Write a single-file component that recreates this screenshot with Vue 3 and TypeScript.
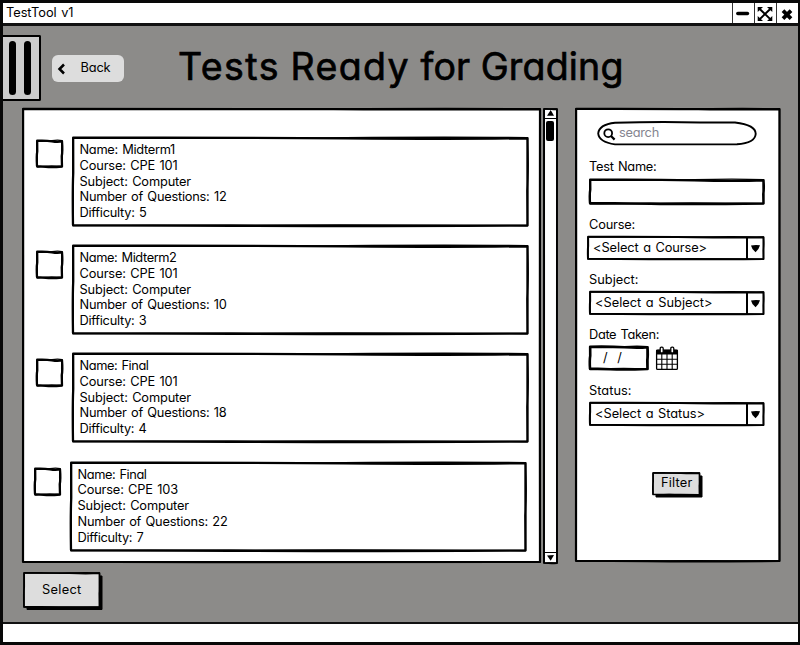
<script setup lang="ts">
import { defineComponent, h } from 'vue'
import type { Directive } from 'vue'

interface Line { text: string; width: number }
interface TestItem { id: number; shifted: boolean; lines: Line[] }

/** Box with a slightly uneven, hand-drawn outline; the content sits over it. */
const SketchBox = defineComponent({
  props: {
    w: { type: Number, required: true },
    h: { type: Number, required: true },
    stroke: { type: Number, default: 2.4 },
    fill: { type: String, default: '#fff' },
    wobble: { type: Number, default: 0.5 },
    shadow: { type: Boolean, default: false },
  },
  setup(props, { slots }) {
    const outline = (k: number): string => {
      const { w, h: ht } = props
      return `M${0.2 * k} ${-0.3 * k} Q${w * 0.35} ${-0.8 * k} ${w * 0.6} ${0.4 * k} T${w} ${0.3 * k} ` +
        `Q${w + 0.9 * k} ${ht * 0.4} ${w - 0.3 * k} ${ht * 0.6} L${w} ${ht} ` +
        `Q${w * 0.6} ${ht + 1.1 * k} ${w * 0.35} ${ht + 0.3 * k} T0 ${ht - 0.5 * k} ` +
        `Q${-0.7 * k} ${ht * 0.6} ${0.3 * k} ${ht * 0.4} Z`
    }
    return () =>
      h('div', { class: 'sketch', style: { width: `${props.w}px`, height: `${props.h}px` } }, [
        h('svg', { class: 'sketch-line', width: props.w, height: props.h }, [
          props.shadow
            ? h('path', { d: `M3 3H${props.w + 2.5}V${props.h + 2.5}H3Z`, fill: '#000', stroke: '#000', 'stroke-width': 1 })
            : null,
          h('path', { d: outline(props.wobble), fill: props.fill, stroke: '#000', 'stroke-width': props.stroke, 'stroke-linejoin': 'round' }),
          h('path', { d: outline(-props.wobble), fill: 'none', stroke: '#000', 'stroke-width': props.stroke * 0.6, 'stroke-linejoin': 'round' }),
        ]),
        h('div', { class: 'sketch-body' }, slots.default?.()),
      ])
  },
})

/** Spreads the letters of a label so that it takes up the given width. */
const vFit: Directive<HTMLElement, number> = {
  mounted(el, { value }) {
    const count = (el.textContent ?? '').length
    const natural = el.getBoundingClientRect().width
    el.style.letterSpacing = `${(value - natural) / count}px`
  },
}

const describe = (id: number, shifted: boolean, name: string, course: string, questions: string, level: string, widths: number[]): TestItem => ({
  id,
  shifted,
  lines: [`Name: ${name}`, `Course: ${course}`, 'Subject: Computer', `Number of Questions: ${questions}`, `Difficulty: ${level}`]
    .map((text, i) => ({ text, width: widths[i] })),
})

const tests: TestItem[] = [
  describe(1, false, 'Midterm1', 'CPE 101', '12', '5', [95.5, 98, 111.5, 147, 67]),
  describe(2, false, 'Midterm2', 'CPE 101', '10', '3', [97, 98, 111.5, 147, 67]),
  describe(3, false, 'Final', 'CPE 101', '18', '4', [69, 98, 111.5, 147, 67]),
  describe(4, true, 'Final', 'CPE 103', '22', '7', [69, 100.5, 111.5, 150, 66]),
]
</script>

<template>
  <div class="window">
    <header class="titlebar">
      <span v-fit="67.5" class="app-name">TestTool v1</span>
      <div class="controls">
        <span class="control">
          <svg width="22" height="19"><path d="M4.8 10.5H14.5" stroke="#000" stroke-width="3.4" stroke-linecap="round" /></svg>
        </span>
        <span class="control">
          <svg width="22" height="19">
            <path d="M5 6.3L15 15.9M15 6.3L5 15.9" stroke="#000" stroke-width="2" />
            <path d="M2.7 4.1H8L2.7 9.1ZM17.3 4.1H12L17.3 9.1ZM2.7 17.9H8L2.7 12.9ZM17.3 17.9H12L17.3 12.9Z" />
          </svg>
        </span>
        <span class="control">
          <svg width="22" height="19"><path d="M6 7.7L14 15.7M14 7.7L6 15.7" stroke="#000" stroke-width="3.8" /></svg>
        </span>
      </div>
    </header>

    <div class="heading">
      <div class="menu"><i></i><i></i></div>
      <button class="back">
        <svg width="9" height="12"><path d="M7 1.5L2.5 6L7 10.5" fill="none" stroke="#000" stroke-width="2.5" /></svg>
        <span v-fit="30">Back</span>
      </button>
      <h1>
        <span v-fit="102">Tests</span>{{ ' ' }}<span v-fit="119.5">Ready</span>{{ ' ' }}<span v-fit="49.5">for</span>{{ ' ' }}<span v-fit="143">Grading</span>
      </h1>
    </div>

    <main>
      <SketchBox :w="517" :h="453" :stroke="2.2" class="panel">
        <div class="list">
          <div v-for="test in tests" :key="test.id" class="row" :class="{ shifted: test.shifted }">
            <SketchBox :w="25" :h="25.5" :wobble="0.9" :stroke="2.3" class="check" />
            <SketchBox :w="454.5" :h="87.5" :stroke="2.3" :wobble="0.8">
              <div class="details">
                <div v-for="line in test.lines" :key="line.text"><span v-fit="line.width">{{ line.text }}</span></div>
              </div>
            </SketchBox>
          </div>
        </div>
      </SketchBox>

      <SketchBox :w="13" :h="454" :stroke="1.9" :wobble="0.3" class="scroll">
        <div class="scrollbar">
          <div class="arrow up"><svg width="9" height="8"><path d="M1 6.7L4.7 1L8 6.7Z" /></svg></div>
          <div class="thumb"></div>
          <div class="arrow down"><svg width="9" height="8"><path d="M1 1.4L8 1L4.7 6.8Z" /></svg></div>
        </div>
      </SketchBox>

      <SketchBox :w="203.5" :h="452" :stroke="2.2" class="filters">
        <form class="form" @submit.prevent>
          <div class="search">
            <svg class="pill" width="160" height="25"><path d="M18 1.8Q62 .5 103 1.5L138 1.5Q159 4 158.7 13Q158 22 140 23.3Q90 23.6 18 23.4Q2 21 1.2 12.5Q2 3.6 18 1.8Z" fill="#fff" stroke="#000" stroke-width="1.9" /></svg>
            <div class="search-body">
              <svg width="13" height="13"><circle cx="5.2" cy="5.2" r="3.9" fill="none" stroke="#000" stroke-width="1.8" /><path d="M8 8L11.6 11.6" stroke="#000" stroke-width="2.2" /></svg>
              <span v-fit="40">search</span>
            </div>
          </div>

          <label class="label name"><span v-fit="67.5">Test Name:</span></label>
          <SketchBox :w="173.5" :h="23.5" :wobble="0.9" />

          <label class="label course"><span v-fit="46">Course:</span></label>
          <SketchBox :w="175.5" :h="22" :stroke="2" class="wide">
            <div class="select"><span v-fit="114">&lt;Select a Course&gt;</span><i><svg width="11" height="9"><path d="M1 1.5Q5 .5 10 1.2Q9 5 5.6 8.3Q2 6 1 1.5Z" /></svg></i></div>
          </SketchBox>

          <label class="label subject"><span v-fit="49.5">Subject:</span></label>
          <SketchBox :w="173.5" :h="22" :stroke="2">
            <div class="select"><span v-fit="117.5">&lt;Select a Subject&gt;</span><i><svg width="11" height="9"><path d="M1 1.5Q5 .5 10 1.2Q9 5 5.6 8.3Q2 6 1 1.5Z" /></svg></i></div>
          </SketchBox>

          <label class="label date"><span v-fit="70">Date Taken:</span></label>
          <div class="date-row">
            <SketchBox :w="57.5" :h="22" :stroke="2.6" :wobble="0.8"><div class="date-text">/&nbsp; /</div></SketchBox>
            <svg width="24" height="25" viewBox="0 0 24 25">
              <rect x="1.6" y="4.2" width="20.8" height="19.2" rx="1" fill="#fff" stroke="#000" stroke-width="1.3" />
              <path d="M1 3.8H23V8.5H1Z" />
              <path d="M6.8 8V23M12 8V23M17.2 8V23M2 13.2H22M2 18.2H22" stroke="#000" stroke-width="1.1" />
              <rect x="5.2" y="1.2" width="3" height="5.8" rx="1.2" fill="#fff" stroke="#000" stroke-width="1.3" />
              <rect x="15.8" y="1.2" width="3" height="5.8" rx="1.2" fill="#fff" stroke="#000" stroke-width="1.3" />
            </svg>
          </div>

          <label class="label status"><span v-fit="42.5">Status:</span></label>
          <SketchBox :w="173.5" :h="22" :stroke="2">
            <div class="select"><span v-fit="110">&lt;Select a Status&gt;</span><i><svg width="11" height="9"><path d="M1 1.5Q5 .5 10 1.2Q9 5 5.6 8.3Q2 6 1 1.5Z" /></svg></i></div>
          </SketchBox>

          <SketchBox :w="46.5" :h="21.5" :stroke="1.7" fill="#ddd" shadow class="filter">
            <div class="button"><span v-fit="31.5">Filter</span></div>
          </SketchBox>
        </form>
      </SketchBox>
    </main>

    <div class="actions">
      <SketchBox :w="75.5" :h="34" :stroke="1.8" fill="#ddd" shadow>
        <div class="button"><span v-fit="39.5">Select</span></div>
      </SketchBox>
    </div>
    <footer></footer>
  </div>
</template>

<style>
body { background: #8c8b89; }
.sketch { display: grid; flex: none; }
.sketch-line { grid-area: 1 / 1; overflow: visible; display: block; }
.sketch-body { grid-area: 1 / 1; z-index: 1; min-width: 0; min-height: 0; }
</style>

<style scoped>
* { box-sizing: border-box; }
.window {
  width: 800px; height: 645px; display: flex; flex-direction: column; overflow: hidden;
  background: #8c8b89; color: #000; border: solid #080808; border-width: 3px 2px 3px 3px;
  font: 400 12.8px/16px Inter, "Liberation Sans", sans-serif; font-feature-settings: "cv11", "calt" 0;
  white-space: nowrap; word-spacing: 1px;
}
svg { display: block; flex: none; }
.titlebar { flex: none; height: 23px; display: flex; justify-content: space-between; background: #fff; border-bottom: 3px solid #111; }
.app-name { align-self: flex-start; margin: 2px 0 0 3px; }
.controls { display: flex; }
.control { width: 22px; border-left: 1.5px solid #333; overflow: hidden; }
.heading { flex: none; height: 82px; display: flex; align-items: flex-start; }
.menu { width: 38px; height: 66px; margin-top: 9px; background: #ccc; border: 2px solid #000; border-left: 0; border-radius: 0 2px 2px 0; display: flex; gap: 7.5px; padding: 4px 0 0 5.5px; }
.menu i { width: 7.5px; height: 54px; border-radius: 4px; background: #000; }
.back { margin: 29px 0 0 11px; width: 72px; height: 27px; border: 0; border-radius: 6px; background: #ddd; display: flex; align-items: center; gap: 14.5px; padding: 0 0 1px 5px; font: inherit; font-feature-settings: inherit; color: inherit; }
.back svg { margin-top: 2px; }
h1 { margin: 16px 0 0 54px; font-size: 37.5px; line-height: 49px; font-weight: 400; word-spacing: 0; -webkit-text-stroke: .7px #000; stroke-linejoin: round; }
main { flex: 1; display: flex; padding: .5px 0 0 19.5px; }
.scroll { margin-left: 4px; }
.filters { margin: 0 0 0 19px; }
.list { padding: 29.5px 0 0 14.5px; display: flex; flex-direction: column; gap: 20.5px; }
.row { display: flex; gap: 10.5px; height: 87.5px; }
.row.shifted { margin-left: -2px; margin-top: .5px; }
.check { margin-top: 3px; }
.row:nth-child(n+2) .check { margin-top: 6px; }
.details { padding: 4px 0 0 7px; line-height: 15.75px; }
.scrollbar { height: 454px; display: flex; flex-direction: column; align-items: center; }
.arrow { width: 13px; height: 10px; display: flex; justify-content: center; align-items: center; }
.up { border-bottom: 1.5px solid #000; }
.down { margin-top: auto; height: 11px; border-top: 1.5px solid #000; }
.thumb { width: 8px; height: 20.5px; margin-top: 2px; background: #000; border-radius: 2px; }
.form { display: flex; flex-direction: column; align-items: flex-start; padding: 12.5px 0 0 14.5px; }
.search { display: grid; margin-left: 6.5px; height: 25px; }
.pill, .search-body { grid-area: 1 / 1; }
.search-body { display: flex; align-items: center; gap: 3px; padding: 0 0 1px 6.5px; color: #858590; }
.search-body svg { margin-top: 2px; }
.label { height: 16px; }
.name { margin: 12.5px 0 5px -1px; }
.course { margin: 13.5px 0 4.5px -1px; }
.wide { margin-left: -2px; }
.subject { margin: 12.5px 0 4.5px -1px; }
.date { margin: 12.5px 0 4.5px -1px; }
.status { margin: 13.5px 0 4.5px -1px; }
.select { display: flex; align-items: center; justify-content: space-between; height: 22px; padding-left: 5px; }
.select span { margin-top: -1px; }
.select i { width: 17.5px; height: 22px; border-left: 2px solid #000; display: flex; align-items: center; justify-content: center; }
.date-row { display: flex; height: 22px; gap: 7.5px; }
.date-row > svg { margin-top: -1.5px; }
.date-text { padding: 3px 0 0 13px; letter-spacing: .8px; word-spacing: 0; }
.filter { align-self: flex-start; margin: 47.5px 0 0 63px; }
.button { height: 100%; display: flex; align-items: center; justify-content: center; padding-left: 1px; }
.actions { flex: none; height: 59px; padding: 10px 0 0 20.5px; }
footer { flex: none; height: 21.5px; background: #fff; border-top: 2.5px solid #111; }
</style>
